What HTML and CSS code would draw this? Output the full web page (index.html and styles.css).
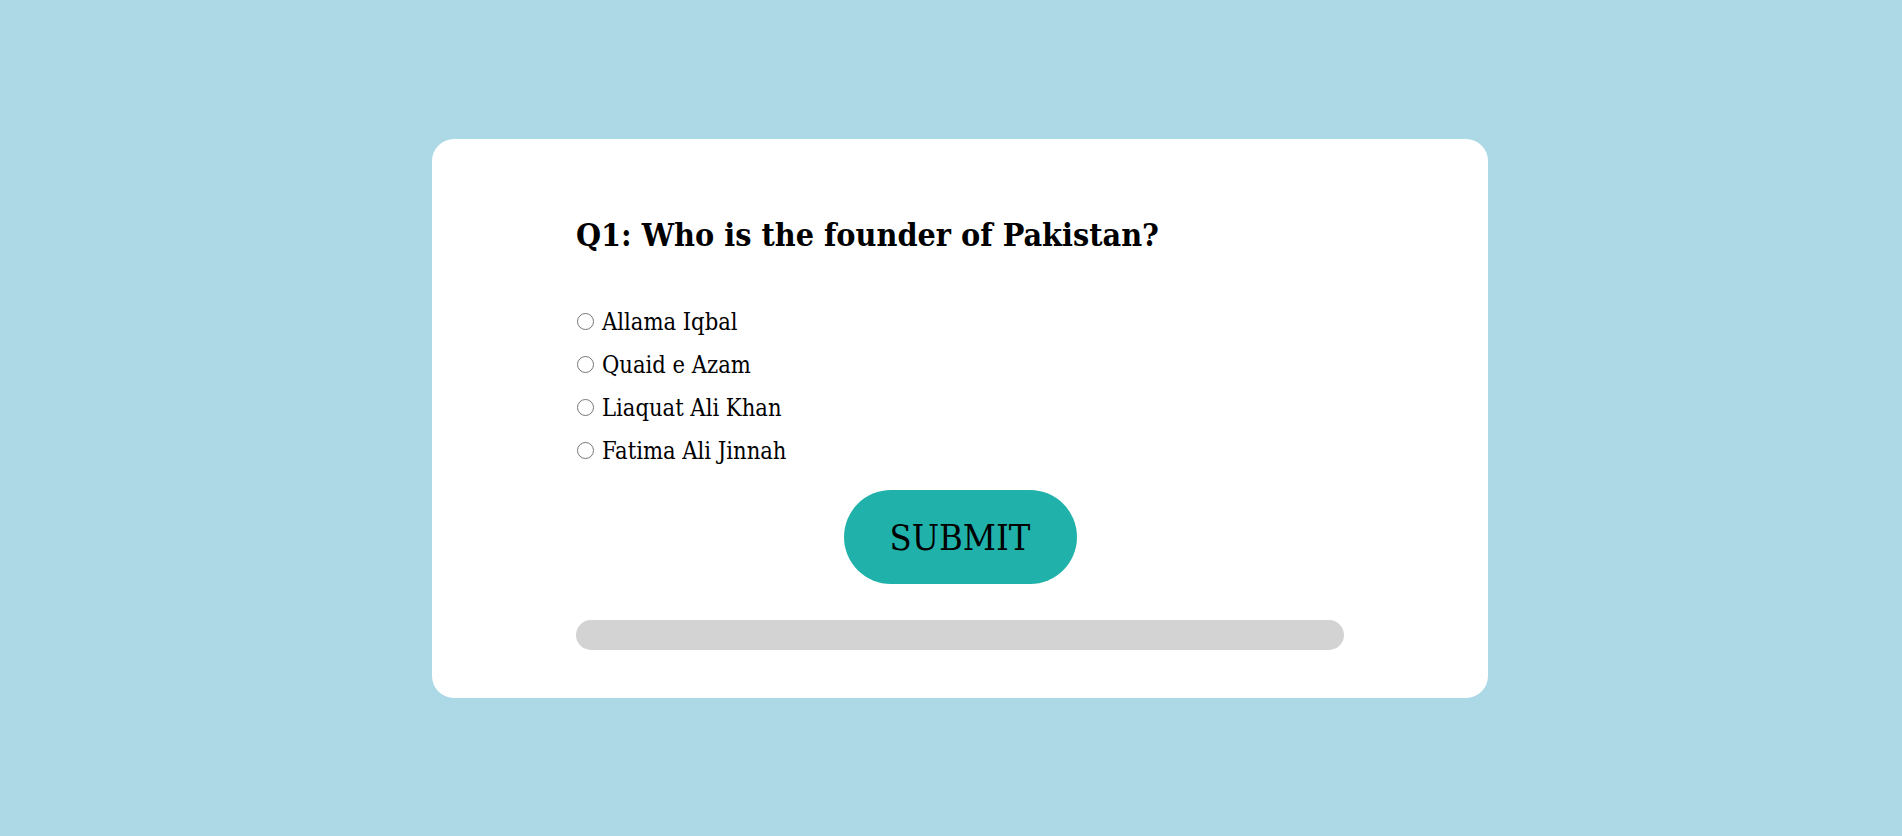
FILE: index.html
```html
<!DOCTYPE html>
<html lang="en">
<head>
<meta charset="utf-8">
<title>Quiz</title>
<link rel="stylesheet" href="styles.css">
</head>
<body>
<div class="card">
  <h2 class="question">Q1: Who is the founder of Pakistan?</h2>
  <ul class="options">
    <li class="option"><input type="radio" name="q" id="a1"><label for="a1">Allama Iqbal</label></li>
    <li class="option"><input type="radio" name="q" id="a2"><label for="a2">Quaid e Azam</label></li>
    <li class="option"><input type="radio" name="q" id="a3"><label for="a3">Liaquat Ali Khan</label></li>
    <li class="option"><input type="radio" name="q" id="a4"><label for="a4">Fatima Ali Jinnah</label></li>
  </ul>
  <div class="actions"><button class="submit">SUBMIT</button></div>
  <div class="progress"></div>
</div>
</body>
</html>
```
FILE: styles.css
```css
html, body {
  margin: 0;
  padding: 0;
}
body {
  background: #add8e6;
  font-family: "DejaVu Serif Condensed", "Liberation Serif", serif;
  font-stretch: condensed;
  color: #000;
  height: 836px;
  overflow: hidden;
}
.card {
  box-sizing: border-box;
  width: 1056px;
  margin: 139px 0 0 432px;
  background: #fff;
  border-radius: 22px;
  padding: 74px 144px 48px;
}
.question {
  margin: 0 0 43px;
  font-size: 32px;
  line-height: 44px;
  font-weight: bold;
}
.options {
  list-style: none;
  margin: 0;
  padding: 0;
}
.option {
  display: flex;
  align-items: center;
  height: 43px;
  font-size: 23.5px;
}
.option input {
  width: 17px;
  height: 17px;
  margin: 0 8px 0 1px;
}
.actions {
  display: flex;
  justify-content: center;
  margin-top: 18px;
}
.submit {
  width: 233px;
  height: 94px;
  border: none;
  border-radius: 47px;
  background: #20b2aa;
  color: #000;
  font-family: "DejaVu Serif Condensed", "Liberation Serif", serif;
  font-stretch: condensed;
  font-size: 36px;
  padding: 0;
}
.progress {
  margin-top: 36px;
  height: 30px;
  border-radius: 15px;
  background: #d3d3d3;
}
```
